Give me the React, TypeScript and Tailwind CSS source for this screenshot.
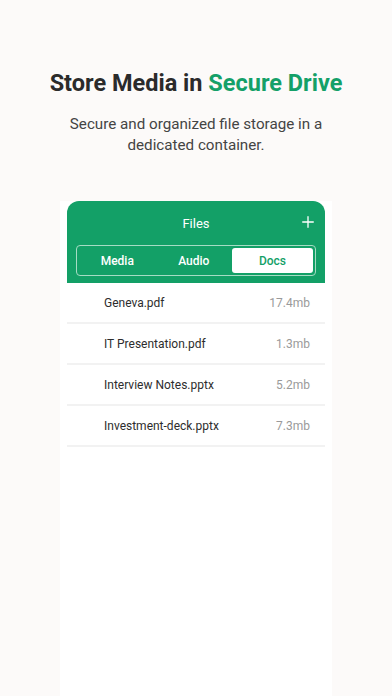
import React from "react";

const files = [
  { name: "Geneva.pdf", size: "17.4mb" },
  { name: "IT Presentation.pdf", size: "1.3mb" },
  { name: "Interview Notes.pptx", size: "5.2mb" },
  { name: "Investment-deck.pptx", size: "7.3mb" },
];

export default function App() {
  return (
    <div
      className="w-[392px] h-[696px] overflow-hidden bg-[#fcfaf9] flex flex-col items-center"
      style={{ fontFamily: 'Roboto, "Noto Sans", sans-serif' }}
    >
      <h1 className="mt-[66px] text-[23.5px] leading-[34px] font-bold text-[#2b2b2b]">
        Store Media in <span className="text-[#14a068]">Secure Drive</span>
      </h1>
      <p className="mt-[14px] text-[15.2px] leading-[21px] text-[#444] text-center w-[300px]">
        Secure and organized file storage in a dedicated container.
      </p>
      <div className="mt-[45px] w-[272px] flex-1 bg-white px-[7px]">
        <div>
          <div className="bg-[#13a067] rounded-t-[12px] px-[9px] pb-[7px]">
            <div className="h-[44px] flex items-center justify-center relative">
              <span className="text-white text-[13px] mt-[1px]">Files</span>
              <span className="absolute right-[2px] top-[15px] text-white">
                <svg width="12" height="12" viewBox="0 0 12 12" fill="none" stroke="white" strokeWidth="1.3" strokeLinecap="round">
                  <path d="M6 0.7v10.6M0.7 6h10.6" />
                </svg>
              </span>
            </div>
            <div className="h-[31px] border border-[#a6dcc4] rounded-[4px] p-[2px] flex text-[12px] font-medium">
              <div className="flex-1 flex items-center justify-center text-white">Media</div>
              <div className="flex-1 flex items-center justify-center text-white">Audio</div>
              <div className="w-[81px] bg-white rounded-[3px] flex items-center justify-center text-[#13a067]">Docs</div>
            </div>
          </div>
          {files.map((f) => (
            <div
              key={f.name}
              className="h-[41px] flex items-center justify-between pl-[37px] pr-[15px] border-b-2 border-[#f2f2f2] text-[12px]"
            >
              <span className="text-[#2d2d2d]">{f.name}</span>
              <span className="text-[#9a9a9a]">{f.size}</span>
            </div>
          ))}
        </div>
      </div>
    </div>
  );
}
